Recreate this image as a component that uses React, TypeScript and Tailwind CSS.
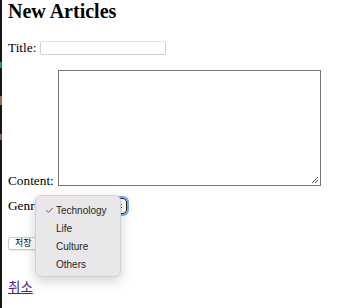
import { Check } from "lucide-react"

const serif = "font-['Liberation_Serif','Noto_Sans_CJK_KR',serif]"
const sans = "font-['Liberation_Sans','Noto_Sans_CJK_KR',sans-serif]"

const genres = ["Technology", "Life", "Culture", "Others"]

export default function App() {
  return (
    <main className={`w-[349px] h-[308px] bg-white flex overflow-hidden text-black ${serif}`}>
      {/* window edge */}
      <div className="w-[2px] shrink-0 flex flex-col bg-[#161616]">
        <div className="h-[62px]" />
        <div className="h-[6px] bg-[#1d8f80]" />
        <div className="h-[28px]" />
        <div className="h-[9px] bg-[#9a6a55]" />
        <div className="h-[29px]" />
        <div className="h-[6px] bg-[#8a5f4d]" />
      </div>

      <div className="pl-[6px] flex flex-col relative">
        <h2 className="text-[20px] font-bold leading-[23px]">New Articles</h2>

        <div className="mt-[16px] h-[18px] flex items-center text-[13.3px]">
          <span>Title:</span>
          <div className="ml-[4px] w-[126px] h-[14px] rounded-[2px] border border-[#cfcfcf] border-t-[#e4e4e4]" />
        </div>

        <div className="mt-[13px] flex items-end text-[13.3px]">
          <span className="leading-[11px]">Content:</span>
          <div className="ml-[4px] w-[263px] h-[116px] border border-[#767676] relative">
            <svg className="absolute right-[1px] bottom-[1px]" width="8" height="8" viewBox="0 0 8 8">
              <path d="M7 1 L1 7 M7 4 L4 7" stroke="#555" strokeWidth="1" />
            </svg>
          </div>
        </div>

        <div className="mt-[11px] h-[17px] flex items-center text-[13.3px]">
          <span>Genre:</span>
          <div className={`ml-[4px] w-[79px] h-[16px] rounded-[4px] border border-[#222] ring-2 ring-[#76a9f5] flex items-center justify-between pl-[6px] pr-[3px] text-[10px] ${sans}`}>
            <span>Technology</span>
            <svg width="6" height="10" viewBox="0 0 6 10">
              <path d="M1 4 L3 2 L5 4 M1 6 L3 8 L5 6" stroke="#444" strokeWidth="1" fill="none" />
            </svg>
          </div>
        </div>

        <div className="mt-[23px] flex">
          <button className={`h-[13px] px-[6px] rounded-[3px] border border-[#cdcdcd] bg-white text-[9px] leading-[11px] shadow-[0_0.5px_1px_rgba(0,0,0,0.1)] ${sans}`}>
            저장
          </button>
        </div>

        <a
          href="#!"
          className="mt-[27px] text-[13.5px] text-[#551a8b] underline font-['Noto_Sans_CJK_KR',sans-serif] leading-[18px] w-fit"
        >
          취소
        </a>

        {/* open select menu */}
        <ul
          className={`absolute left-[33px] top-[195px] w-[86px] h-[82px] rounded-[6px] bg-[#e9e7e9] border border-[#d2d0d2] shadow-[0_4px_12px_rgba(0,0,0,0.18)] py-[5px] text-[10px] text-[#262626] ${sans}`}
        >
          {genres.map((g, i) => (
            <li key={g} className="h-[18px] flex items-center">
              <span className="w-[20px] flex justify-end pr-[2px]">
                {i === 0 && <Check size={9} strokeWidth={2} />}
              </span>
              <span>{g}</span>
            </li>
          ))}
        </ul>
      </div>
    </main>
  )
}
